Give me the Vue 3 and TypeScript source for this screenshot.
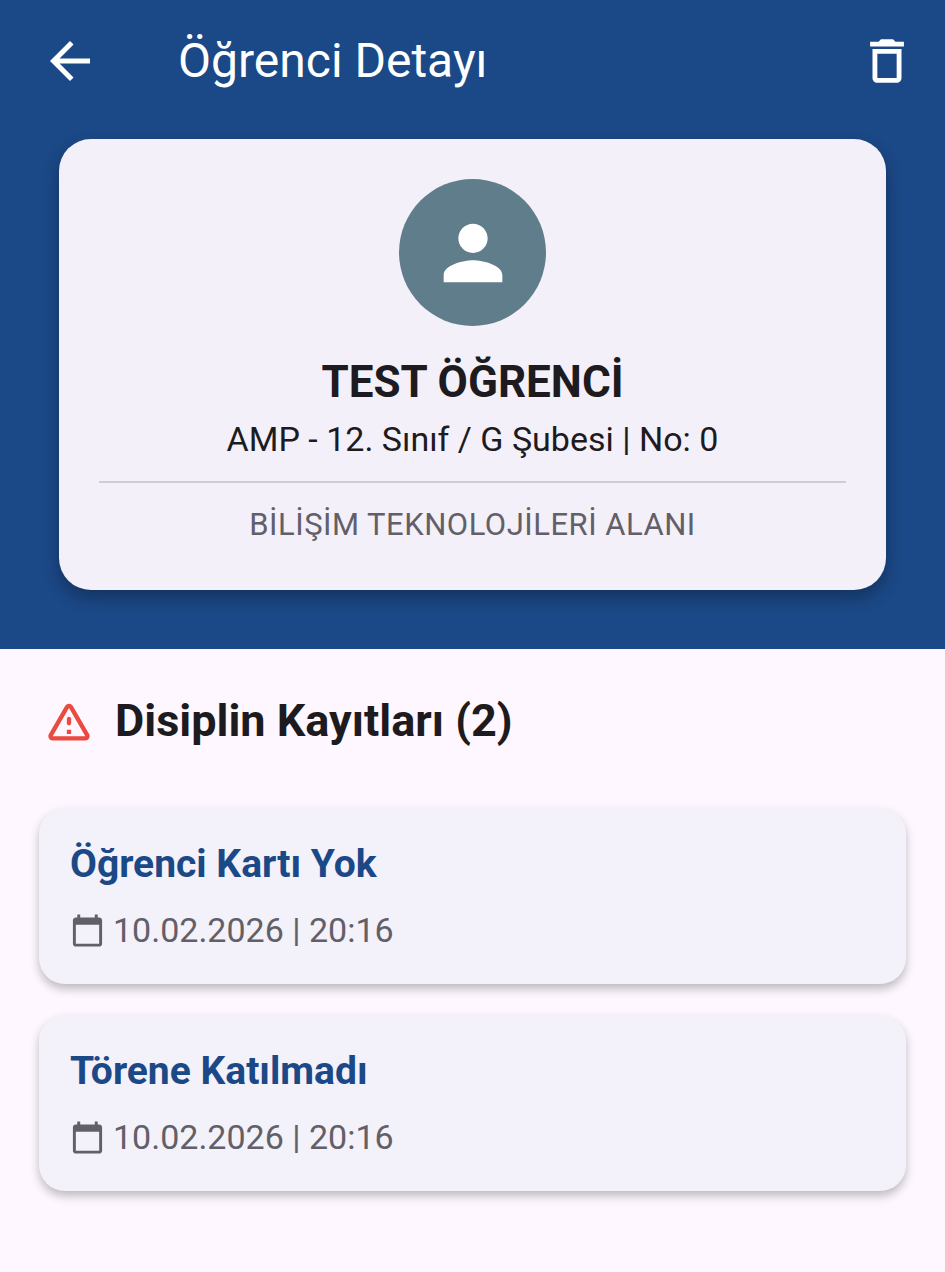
<script setup lang="ts">
interface DisciplineRecord {
  title: string
  date: string
}

const records: DisciplineRecord[] = [
  { title: 'Öğrenci Kartı Yok', date: '10.02.2026 | 20:16' },
  { title: 'Törene Katılmadı', date: '10.02.2026 | 20:16' },
]
</script>

<template>
  <div class="page">
    <header class="hero">
      <div class="app-bar">
        <svg class="back-icon" viewBox="0 0 24 24" fill="currentColor">
          <path d="M20 11H7.83l5.59-5.59L12 4l-8 8 8 8 1.41-1.41L7.83 13H20v-2z" />
        </svg>
        <h1 class="app-title">Öğrenci Detayı</h1>
        <svg class="delete-icon" viewBox="0 0 24 24" fill="currentColor">
          <path d="M6 19c0 1.1.9 2 2 2h8c1.1 0 2-.9 2-2V7H6v12zM8 9h8v10H8V9zm7.5-5l-1-1h-5l-1 1H5v2h14V4h-3.5z" />
        </svg>
      </div>

      <section class="profile-card">
        <div class="avatar">
          <svg viewBox="0 0 24 24" fill="currentColor">
            <path d="M12 12c2.21 0 4-1.79 4-4s-1.79-4-4-4-4 1.79-4 4 1.79 4 4 4zm0 2c-2.67 0-8 1.34-8 4v2h16v-2c0-2.66-5.33-4-8-4z" />
          </svg>
        </div>
        <h2 class="student-name">TEST ÖĞRENCİ</h2>
        <p class="student-class">AMP - 12. Sınıf / G Şubesi | No: 0</p>
        <div class="divider"></div>
        <p class="student-field">BİLİŞİM TEKNOLOJİLERİ ALANI</p>
      </section>
    </header>

    <main class="records">
      <div class="records-head">
        <svg class="warn-icon" viewBox="0 0 24 24" fill="currentColor">
          <path d="M12 5.99 19.53 19H4.47L12 5.99M2.74 18c-.77 1.33.19 3 1.73 3h15.06c1.54 0 2.5-1.67 1.73-3L13.73 4.99c-.77-1.33-2.69-1.33-3.46 0L2.74 18zM11 11v2c0 .55.45 1 1 1s1-.45 1-1v-2c0-.55-.45-1-1-1s-1 .45-1 1zm0 5h2v2h-2z" />
        </svg>
        <h3 class="records-title">Disiplin Kayıtları (2)</h3>
      </div>

      <article v-for="(record, i) in records" :key="i" class="record-card">
        <h4 class="record-title">{{ record.title }}</h4>
        <div class="record-date">
          <svg viewBox="0 0 24 24" fill="currentColor">
            <path d="M20 3h-1V1h-2v2H7V1H5v2H4c-1.1 0-2 .9-2 2v16c0 1.1.9 2 2 2h16c1.1 0 2-.9 2-2V5c0-1.1-.9-2-2-2zm0 18H4V8h16v13z" />
          </svg>
          <span>{{ record.date }}</span>
        </div>
      </article>
    </main>
  </div>
</template>

<style>
html,
body {
  margin: 0;
  background: #fef7ff;
}
</style>

<style scoped>
.page {
  min-height: 1272px;
  background: #fef7ff;
  font-family: Roboto, "Noto Sans", sans-serif;
  color: #1d1b20;
}

.hero {
  height: 649px;
  box-sizing: border-box;
  background: #1b4886;
  padding: 31px 0 0;
}

.app-bar {
  display: flex;
  align-items: center;
  height: 60px;
  padding: 0 29px 0 40px;
  color: #fff;
}

.back-icon {
  width: 60px;
  height: 60px;
  margin-right: 78px;
  margin-left: 0;
  flex: none;
}

.app-title {
  flex: 1;
  margin: 0;
  font-size: 48px;
  font-weight: 400;
  line-height: 60px;
}

.delete-icon {
  width: 58px;
  height: 58px;
  flex: none;
}

.profile-card {
  display: flex;
  flex-direction: column;
  align-items: center;
  box-sizing: border-box;
  height: 451px;
  margin: 48px 59px 0;
  padding: 40px 40px 0;
  background: #f3f0f9;
  border-radius: 32px;
  box-shadow: 0 8px 16px rgba(0, 0, 0, 0.28);
}

.avatar {
  display: flex;
  align-items: center;
  justify-content: center;
  width: 147px;
  height: 147px;
  border-radius: 50%;
  background: #607d8b;
  color: #fff;
}

.avatar svg {
  width: 88px;
  height: 88px;
}

.student-name {
  margin: 30px 0 0;
  font-size: 44px;
  font-weight: 700;
  line-height: 52px;
  color: #1d1b20;
}

.student-class {
  margin: 9px 0 0;
  font-size: 34px;
  line-height: 44px;
  color: #1d1b20;
}

.divider {
  align-self: stretch;
  height: 2px;
  margin-top: 20px;
  background: #cfccd3;
}

.student-field {
  margin: 22px 0 0;
  font-size: 31px;
  line-height: 40px;
  letter-spacing: 0.5px;
  color: #625f68;
}

.records {
  padding: 44px 39px 0;
}

.records-head {
  display: flex;
  align-items: center;
  gap: 20px;
  padding-left: 4px;
  margin-bottom: 59px;
}

.warn-icon {
  width: 52px;
  height: 52px;
  flex: none;
  color: #ea4a3f;
}

.records-title {
  margin: 0;
  font-size: 45px;
  font-weight: 700;
  line-height: 56px;
  color: #1d1b20;
}

.record-card {
  box-sizing: border-box;
  height: 176px;
  margin-bottom: 31px;
  padding: 31px 31px 0;
  background: #f3f1f9;
  border-radius: 26px;
  box-shadow: 0 5px 10px rgba(0, 0, 0, 0.25);
}

.record-title {
  margin: 0;
  font-size: 39px;
  font-weight: 700;
  line-height: 50px;
  color: #1b4886;
}

.record-date {
  display: flex;
  align-items: center;
  gap: 8px;
  margin-top: 19px;
  font-size: 34px;
  line-height: 44px;
  color: #625f68;
}

.record-date svg {
  width: 35px;
  height: 35px;
  flex: none;
}
</style>
